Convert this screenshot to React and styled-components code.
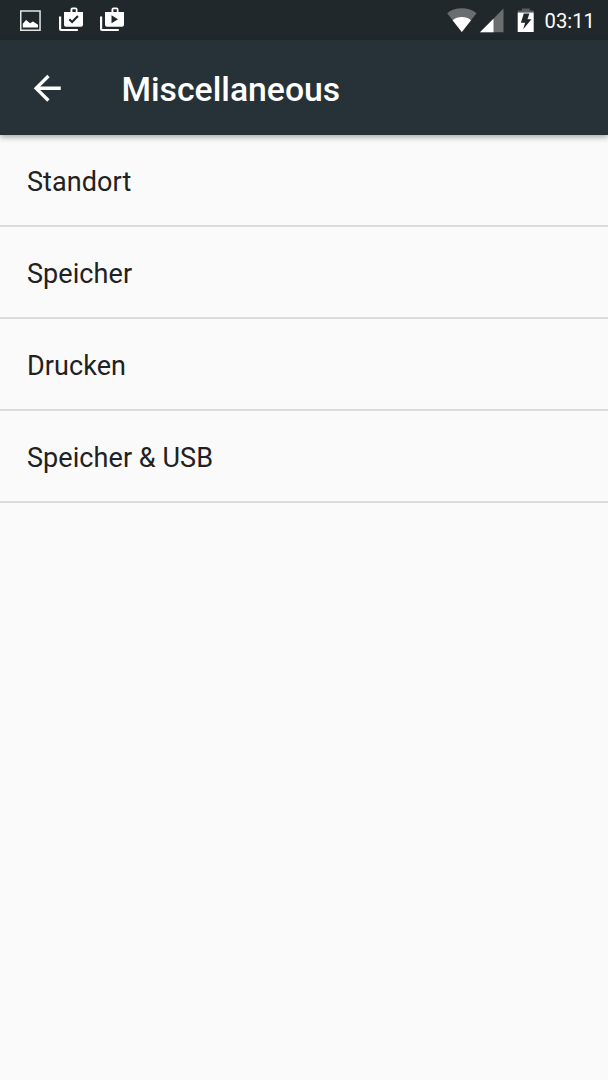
import React from 'react';
import styled, { createGlobalStyle } from 'styled-components';

const GlobalStyle = createGlobalStyle`
	body {
		margin: 0;
		background: #fafafa;
		font-family: Roboto, "Noto Sans", sans-serif;
	}
`;

const Screen = styled.div`
	display: flex;
	flex-direction: column;
	min-height: 1080px;
	background: #fafafa;
`;

const StatusBar = styled.div`
	display: flex;
	justify-content: space-between;
	height: 40px;
	box-sizing: border-box;
	padding: 0 13px 0 19px;
	background: #21282b;
`;

const Notifications = styled.div`
	display: flex;
	align-items: center;
	gap: 17px;
`;

const SystemIcons = styled.div`
	display: flex;
	align-items: center;
`;

const Icon = styled.svg`
	display: block;
	flex: none;
	fill: #fff;
	margin-left: ${props => props.$gap || 0}px;
`;

const Clock = styled.span`
	margin-left: 10px;
	padding-top: 2px;
	font-size: 20.25px;
	line-height: 40px;
	color: #fff;
`;

const Toolbar = styled.header`
	display: flex;
	align-items: center;
	height: 95px;
	box-sizing: border-box;
	padding-left: 27px;
	background: #263238;
	box-shadow: 0 2px 6px rgba(0,0,0,0.35);
	z-index: 1;
`;

const BackButton = styled.button`
	padding: 1px 0 0;
	border: none;
	background: none;
`;

const Title = styled.h1`
	margin: 0 0 0 54px;
	padding-top: 4px;
	font-size: 33.75px;
	font-weight: 500;
	line-height: 40px;
	color: #fff;
`;

const List = styled.ul`
	margin: 0;
	padding: 0;
	list-style: none;
`;

const Item = styled.li`
	height: 92px;
	box-sizing: border-box;
	padding: 2px 27px 0;
	border-bottom: 2px solid #dcdcdc;
	font-size: 27px;
	line-height: 91px;
	letter-spacing: 0.07px;
	color: #212121;
`;

const ImageIcon = () => (
	<Icon width="23" height="40" viewBox="19 0 23 40">
		<path fill="#e4e5e5" fillRule="evenodd" d="M20 10.200h20.800V31H20zM21.500 11.700v17.800h17.800V11.700z" />
		<path d="M22.800 27.500v-3.700l3.300-3.800 3.900 3.200 3-1.700 5 3.300v2.700z" />
	</Icon>
);

const BagIcon = ({ children }) => (
	<Icon width="24" height="40" viewBox="59 0 24 40">
		<path d="M59 16.500h2.200v12.400h16.600V31H61a2 2 0 0 1-2-2z" />
		<path fillRule="evenodd" d="M64 12h6.500V9.500a2 2 0 0 1 2-2h3a2 2 0 0 1 2 2V12H83v12.800a2 2 0 0 1-2 2H66a2 2 0 0 1-2-2zM72.400 9.300V12h3.400V9.300z" />
		{children}
	</Icon>
);

const WifiIcon = () => (
	<Icon width="30" height="40" viewBox="447 0 30 40">
		<path fill="#6a6e70" d="M447.200 13.300C451 10 456 8.300 461.800 8.300s10.900 1.700 14.700 5L461.800 32z" />
		<path d="M452.600 20.200c2.600-2.100 5.700-3.100 9.200-3.100s6.600 1 9.200 3.100L461.800 32z" />
	</Icon>
);

const SignalIcon = () => (
	<Icon $gap={3} width="24" height="40" viewBox="480 0 24 40">
		<path fill="#6a6e70" d="M480 32.300L503.500 8.600v23.700z" />
		<path d="M480 32.300l13.500-13.600v13.600z" />
	</Icon>
);

const BatteryIcon = () => (
	<Icon $gap={13} width="18" height="40" viewBox="517 0 18 40">
		<path fill="#5a6062" d="M522 8.400h7.700v2h4v2.600h-16v-2.600h4.300z" />
		<path d="M517.700 12.600h16V32h-16z" />
		<path fill="#21282b" d="M523.800 13.600h5.600l-1.900 5.700h4l-8.300 9.900 1.900-6.500h-4.200z" />
	</Icon>
);

const items = ['Standort', 'Speicher', 'Drucken', 'Speicher & USB'];

const App = () => (
	<Screen>
		<GlobalStyle />
		<StatusBar>
			<Notifications>
				<ImageIcon />
				<BagIcon>
					<path d="M69.300 19.300l2.800 2.700 5.800-6" fill="none" stroke="#21282b" strokeWidth="2.200" />
				</BagIcon>
				<BagIcon>
					<path d="M70.500 15.200v8l6.500-4z" fill="#21282b" />
				</BagIcon>
			</Notifications>
			<SystemIcons>
				<WifiIcon />
				<SignalIcon />
				<BatteryIcon />
				<Clock>03:11</Clock>
			</SystemIcons>
		</StatusBar>
		<Toolbar>
			<BackButton aria-label="Back">
				<Icon width="40.5" height="40.5" viewBox="0 0 24 24">
					<path d="M20 11H7.830l5.590-5.590L12 4l-8 8 8 8 1.410-1.410L7.830 13H20v-2z" />
				</Icon>
			</BackButton>
			<Title>Miscellaneous</Title>
		</Toolbar>
		<List>
			{items.map(item => <Item key={item}>{item}</Item>)}
		</List>
	</Screen>
);

export default App;
